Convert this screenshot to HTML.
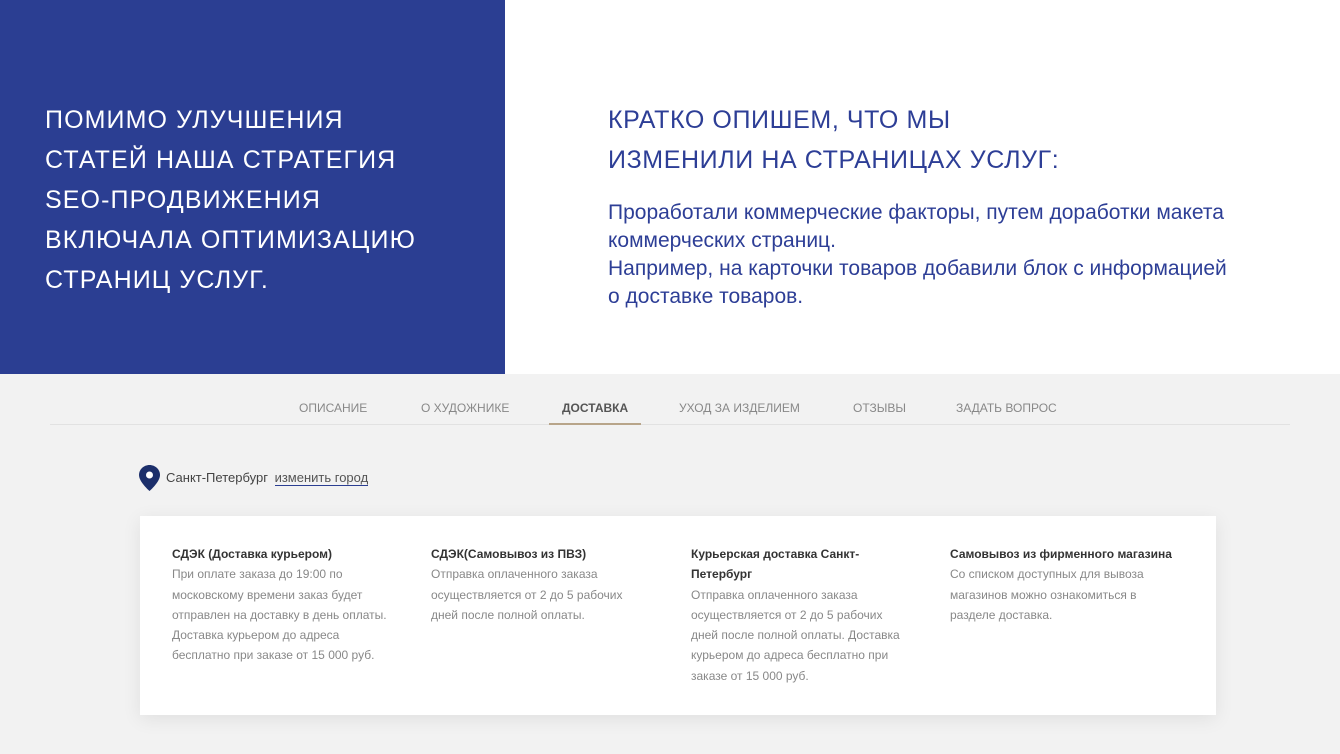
<!DOCTYPE html>
<html><head><meta charset="utf-8"><style>
*{margin:0;padding:0;box-sizing:border-box}
body{width:1340px;height:754px;overflow:hidden;background:#fff;font-family:"Liberation Sans",sans-serif;position:relative}
.left{position:absolute;left:0;top:0;width:505px;height:374px;background:#2b3e92}
.lt{position:absolute;left:45px;top:100px;color:#fff;font-size:25px;line-height:40px;letter-spacing:1.1px}
.rh{position:absolute;left:608px;top:100px;color:#2d3e96;font-size:25px;line-height:40px;letter-spacing:0.6px}
.rb{position:absolute;left:608px;top:199px;color:#2d3e96;font-size:21px;line-height:28px}
.bot{position:absolute;left:0;top:374px;width:1340px;height:380px;background:#f2f2f2}
.tabs{position:absolute;top:401px;font-size:12px;color:#888;white-space:nowrap}
.line{position:absolute;left:50px;top:424px;width:1240px;height:1px;background:#e2e2e2}
.act{position:absolute;left:549px;top:423px;width:92px;height:2px;background:#b8a58a}
.card{position:absolute;left:140px;top:516px;width:1076px;height:199px;background:#fff;box-shadow:0 4px 18px rgba(0,0,0,0.08)}
.col{position:absolute;top:28px;font-size:12px;line-height:20.3px;color:#888}
.col b{color:#333;font-weight:bold;display:block}
</style></head><body>
<div class="left"><div class="lt">ПОМИМО УЛУЧШЕНИЯ<br>СТАТЕЙ НАША СТРАТЕГИЯ<br>SEO-ПРОДВИЖЕНИЯ<br>ВКЛЮЧАЛА ОПТИМИЗАЦИЮ<br>СТРАНИЦ УСЛУГ.</div></div>
<div class="rh">КРАТКО ОПИШЕМ, ЧТО МЫ<br>ИЗМЕНИЛИ НА СТРАНИЦАХ УСЛУГ:</div>
<div class="rb">Проработали коммерческие факторы, путем доработки макета<br>коммерческих страниц.<br>Например, на карточки товаров добавили блок с информацией<br>о доставке товаров.</div>
<div class="bot"></div>
<div class="tabs" style="left:299px">ОПИСАНИЕ</div>
<div class="tabs" style="left:421px">О ХУДОЖНИКЕ</div>
<div class="tabs" style="left:562px;color:#555;font-weight:bold">ДОСТАВКА</div>
<div class="tabs" style="left:679px">УХОД ЗА ИЗДЕЛИЕМ</div>
<div class="tabs" style="left:853px">ОТЗЫВЫ</div>
<div class="tabs" style="left:956px">ЗАДАТЬ ВОПРОС</div>
<div class="line"></div><div class="act"></div>
<svg style="position:absolute;left:139px;top:465px" width="21" height="26" viewBox="0 0 21 26"><path d="M10.5 0C4.7 0 0 4.5 0 10c0 7 10.5 16 10.5 16S21 17 21 10C21 4.5 16.3 0 10.5 0z" fill="#1c2f6b"/><circle cx="10.5" cy="10" r="3.5" fill="#fff"/></svg>
<div style="position:absolute;left:166px;top:470px;font-size:13px;color:#444">Санкт-Петербург <span style="margin-left:3px;color:#555;border-bottom:1px solid #2b3e92">изменить город</span></div>
<div class="card">
<div class="col" style="left:32px;width:225px"><b>СДЭК (Доставка курьером)</b>При оплате заказа до 19:00 по московскому времени заказ будет отправлен на доставку в день оплаты. Доставка курьером до адреса бесплатно при заказе от 15 000 руб.</div>
<div class="col" style="left:291px;width:215px"><b>СДЭК(Самовывоз из ПВЗ)</b>Отправка оплаченного заказа осуществляется от 2 до 5 рабочих дней после полной оплаты.</div>
<div class="col" style="left:551px;width:218px"><b>Курьерская доставка Санкт-Петербург</b>Отправка оплаченного заказа осуществляется от 2 до 5 рабочих дней после полной оплаты. Доставка курьером до адреса бесплатно при заказе от 15 000 руб.</div>
<div class="col" style="left:810px;width:230px"><b>Самовывоз из фирменного магазина</b>Со списком доступных для вывоза магазинов можно ознакомиться в разделе доставка.</div>
</div>
</body></html>
